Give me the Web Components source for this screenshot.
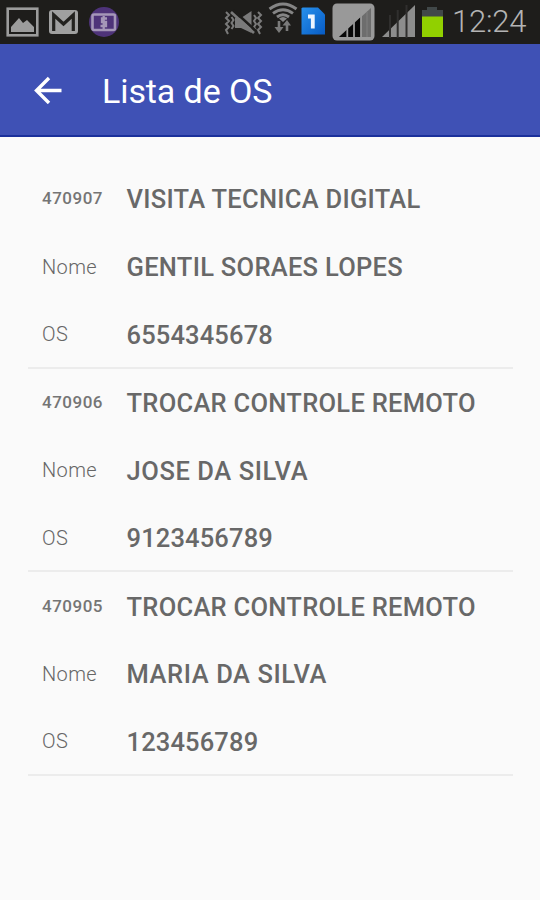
<!DOCTYPE html>
<html lang="pt-BR">
<head>
<meta charset="utf-8">
<title>Lista de OS</title>
<style>
html,body{margin:0;height:100%;background:#fafafa;overflow:hidden}
body{font-family:Roboto,"Liberation Sans",sans-serif}
</style>
</head>
<body>
<os-screen></os-screen>
<script>
function define(name, html) {
  const template = document.createElement('template');
  template.innerHTML = html;
  customElements.define(name, class extends HTMLElement {
    constructor() {
      super();
      this.attachShadow({mode: 'open'}).append(template.content.cloneNode(true));
    }
  });
}

define('status-bar', `
<style>
:host{display:flex;justify-content:space-between;align-items:flex-start;height:43.5px;background:#1e1d1b;box-sizing:border-box}
svg{display:block;height:43px;flex:none}
.left,.right{display:flex}
.clock{font-size:31px;line-height:43px;font-weight:300;color:#b4b4b4;width:88px;white-space:nowrap;letter-spacing:-.2px}
</style>
<div class="left">
<svg width="44" viewBox="0 0 44 43"><rect x="7.7" y="8.7" width="29.6" height="26.6" fill="none" stroke="#9c9c9c" stroke-width="2.6"/><path d="M11 32V27L19 18L23 23L27 20L34 27V32Z" fill="#9c9c9c"/></svg>
<svg width="42" viewBox="44 0 42 43"><rect x="49" y="10" width="29" height="24" rx="3" fill="#a0a0a0"/><path d="M53.7 31V15L63.5 24L73.3 15V31" fill="none" stroke="#23221f" stroke-width="3.2"/></svg>
<svg width="40" viewBox="86 0 40 43"><circle cx="104" cy="22" r="15" fill="#4e3379"/><rect x="92.500" y="14.500" width="22.500" height="15.500" rx="1.500" fill="none" stroke="#a597b8" stroke-width="2.600"/><path d="M107 18.500H102V22H106V26H100.500M103.700 16V29" fill="none" stroke="#a597b8" stroke-width="2.300"/></svg>
</div>
<div class="right">
<svg width="46" viewBox="222 0 46 43"><g fill="none" stroke="#7a7a7a" stroke-width="2"><path d="M226 12L229 15L226 18L229 21L226 24L229 27L226 30L228 34M231.500 17L233.500 20L231.500 23L233.500 26L231.500 29M258 12L261 15L258 18L261 21L258 24L261 27L258 30L260 34M254 15L256 18L254 21L256 24L254 27L256 30"/></g><path d="M235 18H241L251.500 11V33L241 28H235Z" fill="#7a7a7a"/><path d="M233 10L256 31" stroke="#1e1d1b" stroke-width="2.600"/><path d="M231 12L254 33" stroke="#7a7a7a" stroke-width="2.600"/></svg>
<svg width="32" viewBox="268 0 32 43"><g fill="none" stroke="#858585" stroke-width="2.900"><path d="M269.500 9Q283 -1 296.500 9M273 13.300Q283 6 293 13.300M277 17Q283 12.500 289 17"/></g><path d="M279 18.500Q283 15.500 287 18.500L283 22Z" fill="#858585"/><path d="M279 21V30M287 31V23" stroke="#7a7a7a" stroke-width="2.600"/><path d="M274.500 27H283.500L279 33ZM282.500 25.500L287 20L291 25.500Z" fill="#7a7a7a"/></svg>
<svg width="31" viewBox="300 0 31 43"><defs><linearGradient id="sim" x2="1" y2="1"><stop stop-color="#2891ed"/><stop offset="1" stop-color="#075bc4"/></linearGradient></defs><path d="M302.500 7.500H318L325 14.500V34.500H301.500V8.500Z" fill="url(#sim)"/><path d="M308 16.500H312.800V28.500" fill="none" stroke="#eef5ff" stroke-width="3.800"/></svg>
<svg width="47" viewBox="331 0 47 43"><rect x="332.500" y="3.500" width="42" height="37" rx="4.500" fill="#999"/><path d="M339 37L371 8V37Z" fill="#6d6d6d"/><path d="M339 37L361 16.800V37Z" fill="#080808"/><path d="M347.300 20V38M354 15V38M361 10V38" stroke="#999" stroke-width="1.800"/><path d="M367 12V37" stroke="#808080" stroke-width="1"/></svg>
<svg width="40" viewBox="378 0 40 43"><path d="M382 37L415 5V37Z" fill="#8d8d8d"/><path d="M390 15V38M397.700 10V38M406.500 5V38" stroke="#302f2e" stroke-width="2"/></svg>
<svg width="34" viewBox="418 0 34 43"><path d="M422 10H427V7H437V10H443V17H422Z" fill="#414849"/><rect x="422" y="16.500" width="21" height="20.500" fill="#91d000"/></svg>
<span class="clock">12:24</span>
</div>`);

define('app-bar', `
<style>
:host{display:flex;align-items:center;height:93.500px;box-sizing:border-box;padding-left:34px;background:#3f51b5;border-bottom:2px solid #1b309b;color:#fff}
svg{width:28px;height:28px;margin:2px 40px 0 0}
h1{margin:0;font-size:34px;font-weight:400;line-height:40px;letter-spacing:-.1px;padding-top:3px}
</style>
<svg viewBox="0 0 28 28"><path d="M15 2L2.500 14.500L15 27M3 14.500H27.500" fill="none" stroke="#fff" stroke-width="3.400"/></svg>
<h1><slot></slot></h1>`);

define('os-field', `
<style>
:host{display:grid;grid-template-columns:84.500px 1fr;align-items:center;height:67.700px;padding-left:14px;white-space:nowrap}
.label{font-size:20px;font-weight:300;color:#666;letter-spacing:.4px;line-height:24px}
:host([code]) .label{font-size:17px;font-weight:500;color:#757575;letter-spacing:.5px;padding-bottom:1px}
.value{font-size:25.500px;font-weight:500;color:#686868;letter-spacing:var(--tracking,.28px);line-height:30px;padding-top:1px}
</style>
<span class="label"><slot name="label"></slot></span><span class="value"><slot></slot></span>`);

define('os-item', `
<style>:host{display:block;height:203.600px;box-sizing:border-box;border-bottom:2px solid #ececec}</style>
<slot></slot>`);

define('os-screen', `
<style>
:host{display:block;height:900px;background:#fafafa}
main{padding:28px 27px 0 28px}
.name{--tracking:.58px}
.number{--tracking:.15px}
</style>
<status-bar></status-bar>
<app-bar>Lista de OS</app-bar>
<main>
<os-item><os-field code><span slot="label">470907</span>VISITA TECNICA DIGITAL</os-field><os-field><span slot="label">Nome</span>GENTIL SORAES LOPES</os-field><os-field class="number"><span slot="label">OS</span>6554345678</os-field></os-item>
<os-item><os-field code><span slot="label">470906</span>TROCAR CONTROLE REMOTO</os-field><os-field class="name"><span slot="label">Nome</span>JOSE DA SILVA</os-field><os-field class="number"><span slot="label">OS</span>9123456789</os-field></os-item>
<os-item><os-field code><span slot="label">470905</span>TROCAR CONTROLE REMOTO</os-field><os-field class="name"><span slot="label">Nome</span>MARIA DA SILVA</os-field><os-field class="number"><span slot="label">OS</span>123456789</os-field></os-item>
</main>`);
</script>
</body>
</html>
